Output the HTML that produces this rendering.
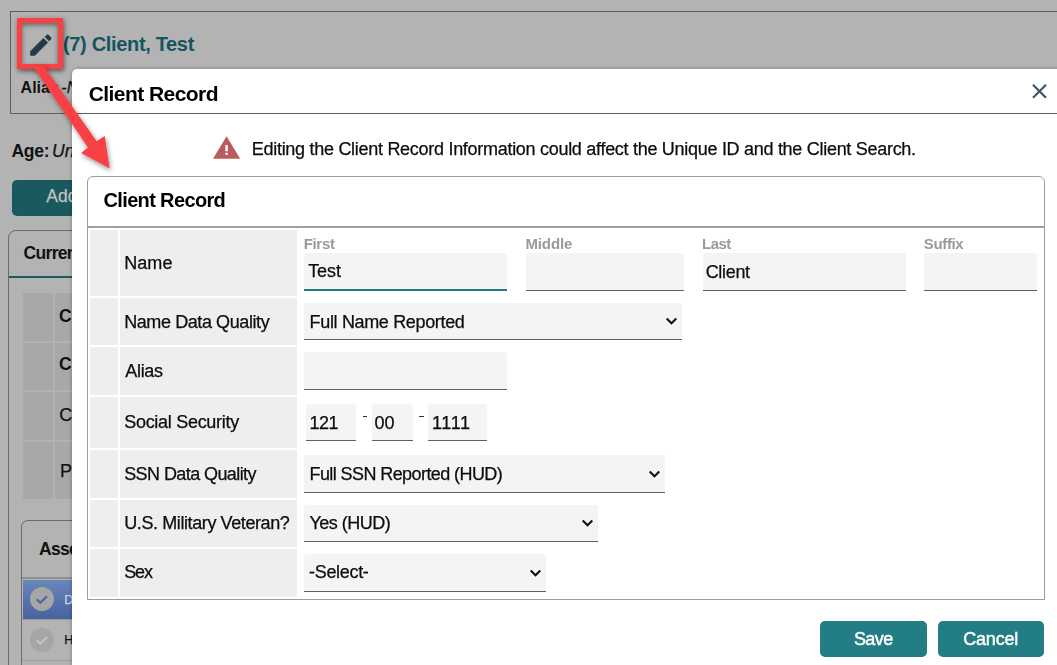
<!DOCTYPE html>
<html><head><meta charset="utf-8"><style>
html,body{margin:0;padding:0;width:1057px;height:665px;overflow:hidden;background:#b3b3b3;}
body{position:relative;font-family:"Liberation Sans",sans-serif;}
</style></head><body>
<div style="position:absolute;left:0;top:0;width:1057px;height:665px;background:#b3b3b3;overflow:hidden">
<div style="position:absolute;left:10px;top:11px;width:1100px;height:103px;border:1px solid #5e5e5e;box-sizing:border-box;"></div>
<div style="position:absolute;left:63.00px;top:33.67px;font-size:20px;line-height:20px;font-weight:bold;color:#13565f;white-space:nowrap;letter-spacing:-0.333px;">(7) Client, Test</div>
<div style="position:absolute;left:20.60px;top:80.06px;font-size:16px;line-height:16px;font-weight:bold;color:#111;white-space:nowrap;">Alias</div>
<div style="position:absolute;left:61.30px;top:80.06px;font-size:16px;line-height:16px;font-weight:normal;color:#111;white-space:nowrap;font-style:italic;-webkit-text-stroke:0.25px #111;">-None-</div>
<div style="position:absolute;left:11.40px;top:143.19px;font-size:17.5px;line-height:17.5px;font-weight:bold;color:#111;white-space:nowrap;letter-spacing:-0.267px;">Age:</div>
<div style="position:absolute;left:52.00px;top:143.19px;font-size:17.5px;line-height:17.5px;font-weight:normal;color:#111;white-space:nowrap;font-style:italic;-webkit-text-stroke:0.25px #111;">Unknown</div>
<div style="position:absolute;left:12px;top:180px;width:200px;height:36px;background:#1a5a5e;border-radius:5px;"></div>
<div style="position:absolute;left:46.30px;top:187.89px;font-size:17.5px;line-height:17.5px;font-weight:normal;color:#c2c2c2;white-space:nowrap;-webkit-text-stroke:0.25px #c2c2c2;">Add Client</div>
<div style="position:absolute;left:8px;top:230px;width:300px;height:500px;border:1px solid #6a6a6a;border-radius:8px 0 0 0;box-sizing:border-box;"></div>
<div style="position:absolute;left:23.50px;top:244.69px;font-size:17.5px;line-height:17.5px;font-weight:bold;color:#111;white-space:nowrap;letter-spacing:-0.667px;">Current</div>
<div style="position:absolute;left:9px;top:276px;width:300px;height:2px;background:#1a5a60;"></div>
<div style="position:absolute;left:23px;top:293px;width:30px;height:48px;background:#a8a8a8;"></div>
<div style="position:absolute;left:55px;top:293px;width:100px;height:48px;background:#a8a8a8;"></div>
<div style="position:absolute;left:23px;top:343px;width:30px;height:47px;background:#a8a8a8;"></div>
<div style="position:absolute;left:55px;top:343px;width:100px;height:47px;background:#a8a8a8;"></div>
<div style="position:absolute;left:23px;top:392px;width:30px;height:47.5px;background:#a8a8a8;"></div>
<div style="position:absolute;left:55px;top:392px;width:100px;height:47.5px;background:#a8a8a8;"></div>
<div style="position:absolute;left:23px;top:441.5px;width:30px;height:57.5px;background:#a8a8a8;"></div>
<div style="position:absolute;left:55px;top:441.5px;width:100px;height:57.5px;background:#a8a8a8;"></div>
<div style="position:absolute;left:59.10px;top:307.89px;font-size:17.5px;line-height:17.5px;font-weight:bold;color:#111;white-space:nowrap;">Case</div>
<div style="position:absolute;left:59.10px;top:356.49px;font-size:17.5px;line-height:17.5px;font-weight:bold;color:#111;white-space:nowrap;">Case</div>
<div style="position:absolute;left:59.20px;top:406.46px;font-size:18px;line-height:18px;font-weight:normal;color:#111;white-space:nowrap;-webkit-text-stroke:0.25px #111;">Case</div>
<div style="position:absolute;left:60.00px;top:461.56px;font-size:18px;line-height:18px;font-weight:normal;color:#111;white-space:nowrap;-webkit-text-stroke:0.25px #111;">Program</div>
<div style="position:absolute;left:21px;top:520px;width:300px;height:200px;border:1px solid #6a6a6a;border-radius:7px 0 0 0;box-sizing:border-box;"></div>
<div style="position:absolute;left:39.00px;top:541.19px;font-size:17.5px;line-height:17.5px;font-weight:bold;color:#111;white-space:nowrap;letter-spacing:-0.700px;">Assessments</div>
<div style="position:absolute;left:22px;top:577px;width:300px;height:2px;background:#8e8e8e;"></div>
<div style="position:absolute;left:23px;top:579.5px;width:300px;height:39px;background:linear-gradient(#6a87ba,#4762a0);"></div>
<div style="position:absolute;left:30px;top:587px;width:24px;height:24px;background:#a6a6a6;border-radius:50%;"></div>
<svg style="position:absolute;left:30px;top:587px" width="24" height="24" viewBox="0 0 24 24"><path d="M6.8 12.3 L10.3 15.8 L17 9.2" stroke="#4a66a6" stroke-width="2.2" fill="none"/></svg>
<div style="position:absolute;left:22px;top:619px;width:300px;height:1px;background:#9a9a9a;"></div>
<div style="position:absolute;left:30px;top:628px;width:24px;height:24px;background:#a6a6a6;border-radius:50%;"></div>
<svg style="position:absolute;left:30px;top:628px" width="24" height="24" viewBox="0 0 24 24"><path d="M6.8 12.3 L10.3 15.8 L17 9.2" stroke="#c4c4c4" stroke-width="2.2" fill="none"/></svg>
<div style="position:absolute;left:64.30px;top:634.12px;font-size:12.5px;line-height:12.5px;font-weight:normal;color:#111;white-space:nowrap;-webkit-text-stroke:0.25px #111;">H</div>
<div style="position:absolute;left:64.30px;top:593.72px;font-size:12.5px;line-height:12.5px;font-weight:normal;color:#cfd0e6;white-space:nowrap;-webkit-text-stroke:0.25px #cfd0e6;">D</div>
<div style="position:absolute;left:22px;top:660px;width:300px;height:1px;background:#9a9a9a;"></div>
</div>
<div style="position:absolute;left:0;top:0;width:1057px;height:665px;will-change:transform">
<div style="position:absolute;left:72px;top:69px;width:1100px;height:700px;background:#fff;border-radius:5px;box-shadow:0 0 4px rgba(0,0,0,0.3)"></div>
<div style="position:absolute;left:88.70px;top:83.22px;font-size:21px;line-height:21px;font-weight:bold;color:#000;white-space:nowrap;letter-spacing:-0.558px;">Client Record</div>
<div style="position:absolute;left:72px;top:113px;width:1000px;height:1px;background:#50606d;"></div>
<svg style="position:absolute;left:1030px;top:82px" width="19" height="18" viewBox="0 0 19 18"><path d="M3 2.8 L16 15.8 M16 2.8 L3 15.8" stroke="#3e5566" stroke-width="2.2" fill="none"/></svg>
<svg style="position:absolute;left:212px;top:135px" width="30" height="25" viewBox="0 0 30 25"><path d="M14.6 1.2 L28.2 23.7 L1 23.7 Z" fill="#b95c5e"/><rect x="13.4" y="10" width="2.4" height="6.3" fill="#fff"/><rect x="13.4" y="17.8" width="2.4" height="2" fill="#fff"/></svg>
<div style="position:absolute;left:251.80px;top:139.96px;font-size:18px;line-height:18px;font-weight:normal;color:#0d0d0d;white-space:nowrap;letter-spacing:-0.288px;-webkit-text-stroke:0.25px #0d0d0d;">Editing the Client Record Information could affect the Unique ID and the Client Search.</div>
<div style="position:absolute;left:87px;top:176px;width:958px;height:424px;border:1px solid #9c9c9c;border-radius:6px 6px 0 0;box-sizing:border-box;"></div>
<div style="position:absolute;left:103.50px;top:189.87px;font-size:20px;line-height:20px;font-weight:bold;color:#000;white-space:nowrap;letter-spacing:-0.642px;">Client Record</div>
<div style="position:absolute;left:88px;top:226px;width:956px;height:2px;background:#a0a0a0;"></div>
<div style="position:absolute;left:90px;top:230px;width:28px;height:66px;background:#eeeeee;"></div>
<div style="position:absolute;left:120px;top:230px;width:177px;height:66px;background:#eeeeee;"></div>
<div style="position:absolute;left:124.20px;top:253.66px;font-size:18px;line-height:18px;font-weight:normal;color:#0d0d0d;white-space:nowrap;letter-spacing:0.067px;-webkit-text-stroke:0.25px #0d0d0d;">Name</div>
<div style="position:absolute;left:90px;top:298px;width:28px;height:47px;background:#eeeeee;"></div>
<div style="position:absolute;left:120px;top:298px;width:177px;height:47px;background:#eeeeee;"></div>
<div style="position:absolute;left:124.20px;top:312.76px;font-size:18px;line-height:18px;font-weight:normal;color:#0d0d0d;white-space:nowrap;letter-spacing:-0.412px;-webkit-text-stroke:0.25px #0d0d0d;">Name Data Quality</div>
<div style="position:absolute;left:90px;top:347px;width:28px;height:48px;background:#eeeeee;"></div>
<div style="position:absolute;left:120px;top:347px;width:177px;height:48px;background:#eeeeee;"></div>
<div style="position:absolute;left:125.20px;top:361.66px;font-size:18px;line-height:18px;font-weight:normal;color:#0d0d0d;white-space:nowrap;letter-spacing:-0.275px;-webkit-text-stroke:0.25px #0d0d0d;">Alias</div>
<div style="position:absolute;left:90px;top:397px;width:28px;height:51px;background:#eeeeee;"></div>
<div style="position:absolute;left:120px;top:397px;width:177px;height:51px;background:#eeeeee;"></div>
<div style="position:absolute;left:124.20px;top:413.26px;font-size:18px;line-height:18px;font-weight:normal;color:#0d0d0d;white-space:nowrap;letter-spacing:-0.286px;-webkit-text-stroke:0.25px #0d0d0d;">Social Security</div>
<div style="position:absolute;left:90px;top:450px;width:28px;height:47.5px;background:#eeeeee;"></div>
<div style="position:absolute;left:120px;top:450px;width:177px;height:47.5px;background:#eeeeee;"></div>
<div style="position:absolute;left:124.20px;top:465.06px;font-size:18px;line-height:18px;font-weight:normal;color:#0d0d0d;white-space:nowrap;letter-spacing:-0.580px;-webkit-text-stroke:0.25px #0d0d0d;">SSN Data Quality</div>
<div style="position:absolute;left:90px;top:500px;width:28px;height:47px;background:#eeeeee;"></div>
<div style="position:absolute;left:120px;top:500px;width:177px;height:47px;background:#eeeeee;"></div>
<div style="position:absolute;left:124.20px;top:514.46px;font-size:18px;line-height:18px;font-weight:normal;color:#0d0d0d;white-space:nowrap;letter-spacing:-0.400px;-webkit-text-stroke:0.25px #0d0d0d;">U.S. Military Veteran?</div>
<div style="position:absolute;left:90px;top:549px;width:28px;height:47.5px;background:#eeeeee;"></div>
<div style="position:absolute;left:120px;top:549px;width:177px;height:47.5px;background:#eeeeee;"></div>
<div style="position:absolute;left:124.20px;top:563.36px;font-size:18px;line-height:18px;font-weight:normal;color:#0d0d0d;white-space:nowrap;letter-spacing:-1.100px;-webkit-text-stroke:0.25px #0d0d0d;">Sex</div>
<div style="position:absolute;left:303.70px;top:236.30px;font-size:15px;line-height:15px;font-weight:bold;color:#9a9a9a;white-space:nowrap;letter-spacing:-0.325px;">First</div>
<div style="position:absolute;left:525.40px;top:236.30px;font-size:15px;line-height:15px;font-weight:bold;color:#9a9a9a;white-space:nowrap;letter-spacing:-0.100px;">Middle</div>
<div style="position:absolute;left:702.10px;top:236.30px;font-size:15px;line-height:15px;font-weight:bold;color:#9a9a9a;white-space:nowrap;letter-spacing:-0.600px;">Last</div>
<div style="position:absolute;left:923.80px;top:236.30px;font-size:15px;line-height:15px;font-weight:bold;color:#9a9a9a;white-space:nowrap;letter-spacing:-0.360px;">Suffix</div>
<div style="position:absolute;left:304px;top:253px;width:203px;height:38px;background:#f4f4f4;border-radius:3px 3px 0 0;border-bottom:2px solid #1f7c82;box-sizing:border-box;"></div>
<div style="position:absolute;left:308.20px;top:262.36px;font-size:18px;line-height:18px;font-weight:normal;color:#0d0d0d;white-space:nowrap;letter-spacing:-0.100px;-webkit-text-stroke:0.25px #0d0d0d;">Test</div>
<div style="position:absolute;left:526px;top:253px;width:158px;height:38px;background:#f4f4f4;border-radius:3px 3px 0 0;border-bottom:1px solid #4f6374;box-sizing:border-box;"></div>
<div style="position:absolute;left:703px;top:253px;width:203px;height:38px;background:#f4f4f4;border-radius:3px 3px 0 0;border-bottom:1px solid #4f6374;box-sizing:border-box;"></div>
<div style="position:absolute;left:705.70px;top:262.66px;font-size:18px;line-height:18px;font-weight:normal;color:#0d0d0d;white-space:nowrap;letter-spacing:-0.320px;-webkit-text-stroke:0.25px #0d0d0d;">Client</div>
<div style="position:absolute;left:924px;top:253px;width:113px;height:38px;background:#f4f4f4;border-radius:3px 3px 0 0;border-bottom:1px solid #4f6374;box-sizing:border-box;"></div>
<div style="position:absolute;left:304px;top:303px;width:378px;height:37px;background:#f4f4f4;border-radius:3px 3px 0 0;border-bottom:1px solid #4f6374;box-sizing:border-box;"></div>
<svg style="position:absolute;left:664.90px;top:317.30px" width="13" height="9" viewBox="0 0 13 9"><path d="M1.7 1.4 L6.5 6.2 L11.3 1.4" stroke="#111" stroke-width="2.1" fill="none"/></svg>
<div style="position:absolute;left:309.60px;top:312.66px;font-size:18px;line-height:18px;font-weight:normal;color:#0d0d0d;white-space:nowrap;letter-spacing:-0.341px;-webkit-text-stroke:0.25px #0d0d0d;">Full Name Reported</div>
<div style="position:absolute;left:304px;top:352px;width:203px;height:38px;background:#f4f4f4;border-radius:3px 3px 0 0;border-bottom:1px solid #4f6374;box-sizing:border-box;"></div>
<div style="position:absolute;left:306px;top:404px;width:50px;height:37px;background:#f4f4f4;border-radius:3px 3px 0 0;border-bottom:1px solid #4f6374;box-sizing:border-box;"></div>
<div style="position:absolute;left:309.40px;top:413.56px;font-size:18px;line-height:18px;font-weight:normal;color:#0d0d0d;white-space:nowrap;letter-spacing:-0.500px;-webkit-text-stroke:0.25px #0d0d0d;">121</div>
<div style="position:absolute;left:372px;top:404px;width:41px;height:37px;background:#f4f4f4;border-radius:3px 3px 0 0;border-bottom:1px solid #4f6374;box-sizing:border-box;"></div>
<div style="position:absolute;left:374.50px;top:413.56px;font-size:18px;line-height:18px;font-weight:normal;color:#0d0d0d;white-space:nowrap;letter-spacing:-0.100px;-webkit-text-stroke:0.25px #0d0d0d;">00</div>
<div style="position:absolute;left:428px;top:404px;width:59px;height:37px;background:#f4f4f4;border-radius:3px 3px 0 0;border-bottom:1px solid #4f6374;box-sizing:border-box;"></div>
<div style="position:absolute;left:432.00px;top:413.56px;font-size:18px;line-height:18px;font-weight:normal;color:#0d0d0d;white-space:nowrap;letter-spacing:0.667px;-webkit-text-stroke:0.25px #0d0d0d;">1111</div>
<div style="position:absolute;left:362.5px;top:416px;width:4.5px;height:1.2px;background:#333;"></div>
<div style="position:absolute;left:419px;top:416px;width:4.5px;height:1.2px;background:#333;"></div>
<div style="position:absolute;left:304px;top:455px;width:361px;height:38px;background:#f4f4f4;border-radius:3px 3px 0 0;border-bottom:1px solid #4f6374;box-sizing:border-box;"></div>
<svg style="position:absolute;left:647.90px;top:469.80px" width="13" height="9" viewBox="0 0 13 9"><path d="M1.7 1.4 L6.5 6.2 L11.3 1.4" stroke="#111" stroke-width="2.1" fill="none"/></svg>
<div style="position:absolute;left:309.50px;top:464.56px;font-size:18px;line-height:18px;font-weight:normal;color:#0d0d0d;white-space:nowrap;letter-spacing:-0.582px;-webkit-text-stroke:0.25px #0d0d0d;">Full SSN Reported (HUD)</div>
<div style="position:absolute;left:304px;top:505px;width:294px;height:37px;background:#f4f4f4;border-radius:3px 3px 0 0;border-bottom:1px solid #4f6374;box-sizing:border-box;"></div>
<svg style="position:absolute;left:580.90px;top:519.30px" width="13" height="9" viewBox="0 0 13 9"><path d="M1.7 1.4 L6.5 6.2 L11.3 1.4" stroke="#111" stroke-width="2.1" fill="none"/></svg>
<div style="position:absolute;left:309.50px;top:514.46px;font-size:18px;line-height:18px;font-weight:normal;color:#0d0d0d;white-space:nowrap;letter-spacing:-0.500px;-webkit-text-stroke:0.25px #0d0d0d;">Yes (HUD)</div>
<div style="position:absolute;left:304px;top:554px;width:242px;height:38px;background:#f4f4f4;border-radius:3px 3px 0 0;border-bottom:1px solid #4f6374;box-sizing:border-box;"></div>
<svg style="position:absolute;left:528.90px;top:568.80px" width="13" height="9" viewBox="0 0 13 9"><path d="M1.7 1.4 L6.5 6.2 L11.3 1.4" stroke="#111" stroke-width="2.1" fill="none"/></svg>
<div style="position:absolute;left:309.10px;top:562.96px;font-size:18px;line-height:18px;font-weight:normal;color:#0d0d0d;white-space:nowrap;letter-spacing:-0.329px;-webkit-text-stroke:0.25px #0d0d0d;">-Select-</div>
<div style="position:absolute;left:820px;top:621px;width:107px;height:36px;background:#237d85;border-radius:5px;"></div>
<div style="position:absolute;left:938px;top:621px;width:106px;height:36px;background:#237d85;border-radius:5px;"></div>
<div style="position:absolute;left:853.90px;top:629.76px;font-size:18px;line-height:18px;font-weight:normal;color:#fff;white-space:nowrap;letter-spacing:-0.533px;-webkit-text-stroke:0.45px #fff;">Save</div>
<div style="position:absolute;left:963.20px;top:629.76px;font-size:18px;line-height:18px;font-weight:normal;color:#fff;white-space:nowrap;letter-spacing:-0.180px;-webkit-text-stroke:0.45px #fff;">Cancel</div>
</div>
<div style="position:absolute;left:17px;top:18px;width:46px;height:51px;border:5px solid #f94144;box-sizing:border-box;box-shadow:1px 2px 5px rgba(0,0,0,0.55), inset 0 2px 5px rgba(0,0,0,0.45)"></div>
<svg style="position:absolute;left:26.5px;top:31px" width="28" height="28" viewBox="0 0 24 24"><path fill="#263a46" stroke="#263a46" stroke-width="0.45" d="M3 17.25V21h3.75L17.81 9.94l-3.75-3.75L3 17.25z"/><path fill="#263a46" d="M20.71 7.04a1 1 0 0 0 0-1.41l-2.34-2.34a1 1 0 0 0-1.41 0l-1.83 1.83 3.75 3.75 1.83-1.83z"/></svg>
<svg style="position:absolute;left:0;top:0;overflow:visible" width="1057" height="665"><defs><filter id="sh" x="-50%" y="-50%" width="200%" height="200%"><feDropShadow dx="1" dy="2" stdDeviation="2.5" flood-color="#000" flood-opacity="0.45"/></filter></defs><polygon filter="url(#sh)" fill="#f94144" points="32.9,66 43.7,66 96.7,141.2 104.7,136.1 109.7,168.6 81.1,153 88,147.4"/></svg>
</body></html>
